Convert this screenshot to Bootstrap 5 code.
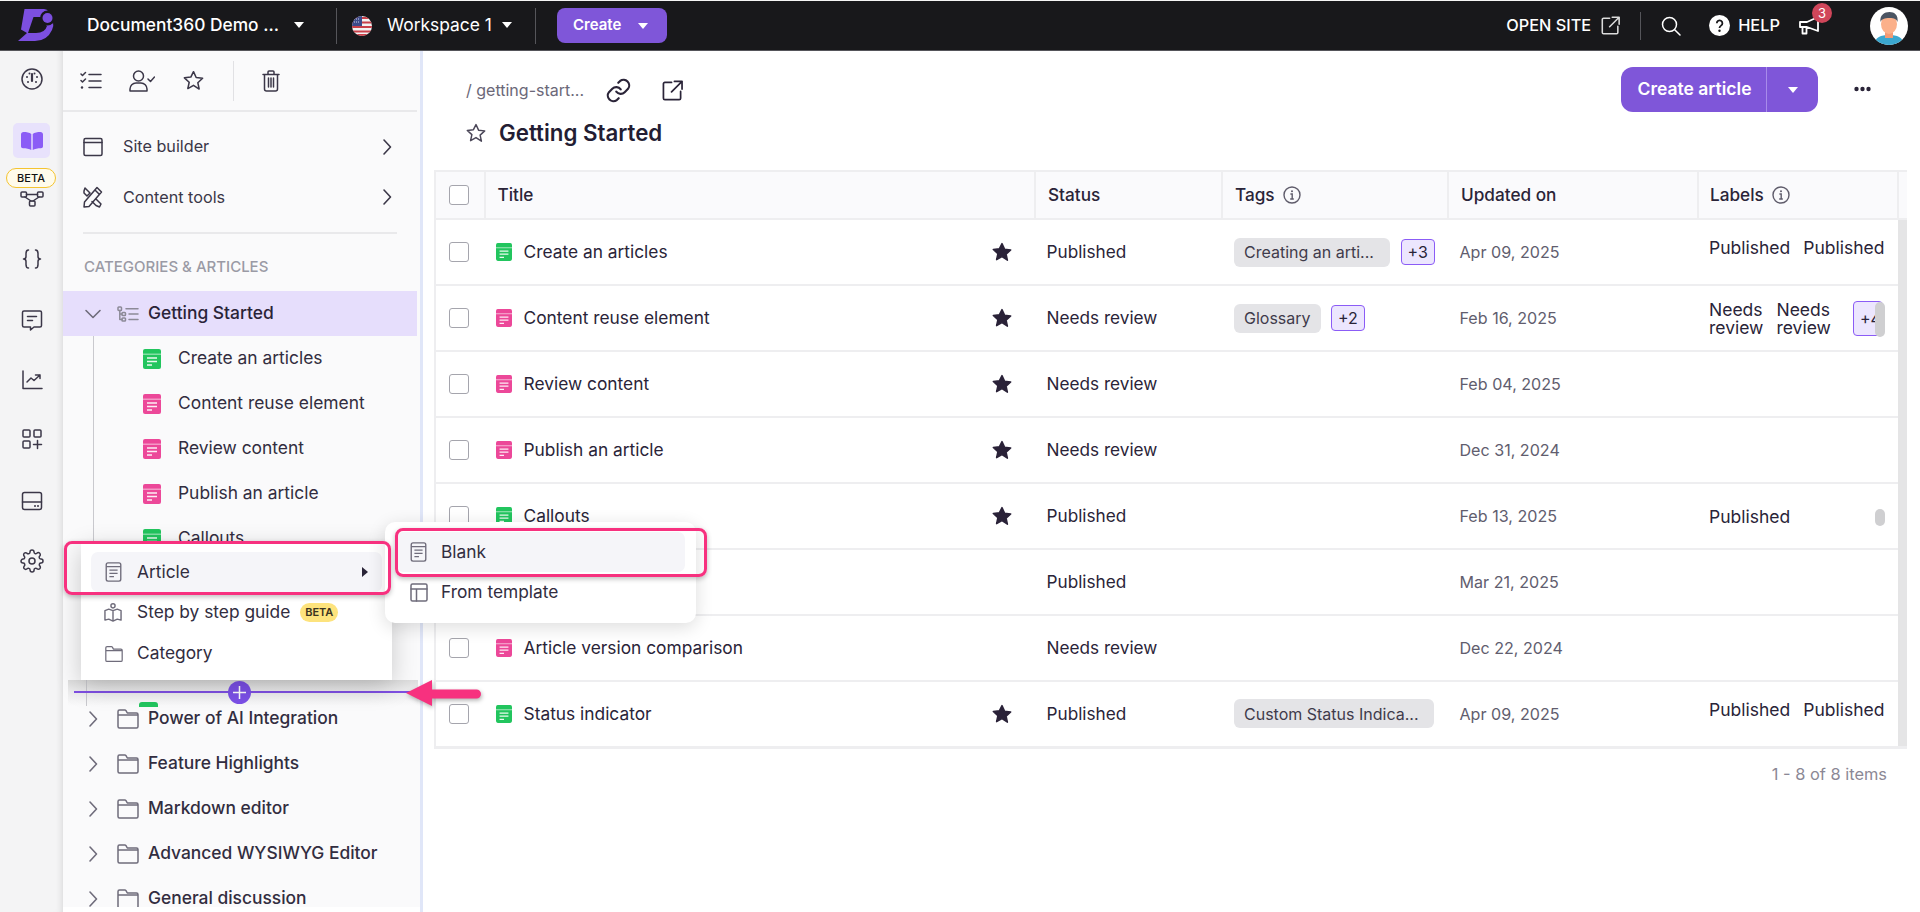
<!doctype html>
<html lang="en">
<head>
<meta charset="utf-8">
<title>Document360</title>
<link href="https://cdn.jsdelivr.net/npm/bootstrap@5.3.0/dist/css/bootstrap.min.css" rel="stylesheet">
<style>
html,body{height:912px;overflow:hidden;background:#fff}
body{font-family:Inter,"Noto Sans",sans-serif;color:#2a2438;font-size:16px;position:relative}
svg{display:block;flex:none}
.ic{fill:none;stroke:currentColor;stroke-width:1.5;stroke-linecap:round;stroke-linejoin:round}
.sym-defs{position:absolute}
.grn{color:#22c55e}.pnk{color:#ec4899}.dk{color:#2a2238}.gr{color:#5f5c6b}

.topbar{height:51px;background:#18181b;border-top:1px solid #f5f5f5;border-bottom:1px solid #55555a;color:#fff;padding:0}
.logo-box{width:87px;padding-left:18px}
.tb-org{font-size:17.35px;font-weight:500;width:249px;white-space:nowrap}
.tb-org .caret{margin-left:15px}
.tb-flag{margin-left:15px}
.tb-ws{font-size:17.4px;font-weight:400;margin-left:15px;width:125px;white-space:nowrap}
.caret{width:0;height:0;border-left:5.5px solid transparent;border-right:5.5px solid transparent;border-top:6px solid currentColor;flex:none}
.tb-div{width:1px;height:36px;background:#55555a;flex:none}
.tb-div2{margin-left:23px}
.create-top{width:110px;height:35px;margin-left:21px;background:#7f56d9;border-radius:8px;border:0;color:#fff;font-size:15px;font-weight:600;padding:0 0 0 16px}
.create-top .caret{margin-left:auto;margin-right:19px}
.open-site{font-size:16.3px;font-weight:500;white-space:nowrap}
.top-right{padding-right:12px}
.i-ext{margin-left:10px;color:#dcdcdc}
.tb-div3{height:28px;margin-left:20px}
.i-srch{margin-left:20px}
.i-help{margin-left:28px}
.help-t{font-size:16.4px;font-weight:500;margin-left:8px}
.bell-wrap{position:relative;width:22px;margin-left:19px;margin-right:49px}
.i-bell{stroke-width:1.8}
.bell-badge{position:absolute;left:13px;top:-13px;width:20px;height:20px;border-radius:50%;background:#d0465a;color:#fff;font-size:13px;text-align:center;line-height:20px}

.app{height:861px}
.rail{width:63px;background:#f4f4f5;box-shadow:inset -7px 0 7px -6px rgba(0,0,0,.12);color:#3b3748;padding-top:8px;flex:none;position:relative}
.rail-i{width:37px;height:40px;margin:0 auto 20px;display:flex;align-items:center;justify-content:center;border-radius:5px;position:relative}
.rail-i.on{height:35px;margin-top:24px;margin-bottom:21px;background:#e8e2fc;color:#8b5cf6}
.rail-i.m19{margin-bottom:19px}
.rail-i.m21{margin-bottom:21px}
.rail-i.m22{margin-bottom:22px}
.beta-r{position:absolute;left:6px;top:117px;width:50px;height:20px;border-radius:10px;border:1px solid #f4c430;background:#fffbeb;color:#111;font-size:11px;font-weight:500;line-height:18px;text-align:center;z-index:2}

.side-col{width:360px;flex:none;border-right:3px solid #e0e6f8}
.side{height:856px;background:#fafafb;overflow:hidden;width:357px}
.s-tools{height:61px;border-bottom:2px solid #e9e9eb;padding-left:2.5px;color:#3b3748;margin-right:3px}
.s-tb{width:51px;display:flex;justify-content:center}
.s-vd{width:1px;height:40px;background:#e1e1e4;margin-left:14.5px}
.s-tb2{width:74px;display:flex;justify-content:center}
.s-link{height:51px;padding:0 28px 0 20px;color:#3b3748;font-size:16.2px}
.s-link span{margin-left:20px;flex:1}
.s-first{margin-top:9.5px;height:50px}
.s-hr{height:2px;background:#e9e9eb;margin:9px 23px 0 20px}
.s-lab{font-size:15px;font-weight:500;color:#9a9aa5;margin:22px 0 0 21px;height:22px;line-height:22px}
.s-tree{margin:0;padding:0;list-style:none}
.s-row{height:45px;display:flex;align-items:center;font-size:17.4px;color:#322d40;white-space:nowrap}
.s-row.act{background:#e6defc;margin:13.5px 3px 0 0;color:#2a2438}
.s-cv{width:20px;margin-left:20px;color:#6f6c7b}
.s-fi{margin-left:14px;color:#6f6c7b}
.s-tr{stroke:#8c8a97}
.s-row .s-nm{margin-left:9px;font-weight:500}
.s-kids{position:relative;margin:0;padding:0;list-style:none}
.s-kids::before{content:"";position:absolute;left:30px;top:0;bottom:0;width:1px;background:#c9c9ce}
.s-kid{padding-left:80px;gap:17px}

.main{flex:1;min-width:0;padding:0 13px 0 11px}
.m-top{height:119px}
.crumb{font-size:16px;color:#6b6878;margin-left:32px;height:46px;white-space:nowrap}
.crumb-t{width:118px}
.i-link{margin-left:21px;color:#2a2438;stroke-width:1.9}
.i-ext2{margin-left:30px;color:#2a2438}
.m-trow{margin:3px 0 0 31px;height:34px}
.i-st{color:#4b4758}
.m-title{font-size:22.3px;font-weight:600;color:#231d33;margin-left:12px;line-height:1.2}
.m-l{padding:16px 0 0 0}
.m-btn{height:45px;width:197px;background:#7f56d9;border-radius:12px;color:#fff;font-weight:600;font-size:17.5px;border:0;padding:0}
.m-btn .t{width:145px;text-align:center;padding-left:2px;display:inline-block;white-space:nowrap}
.m-btn .d{width:1px;height:45px;background:#a88bea}
.m-btn .c{flex:1;display:flex;justify-content:center}
.m-r{margin-top:16px;padding-right:36px;gap:36px}
.i-dots{margin-top:19px}

.dt{table-layout:fixed;width:1472px;margin:0;border-collapse:collapse;color:#2a2438;--bs-table-color:#2a2438;font-size:17.35px;border:2px solid #eeeef0;border-width:2px 0 3px 2px}
.dt th,.dt td{padding:0 0 0 12px;vertical-align:middle;border-bottom:2px solid #eeeef0;font-weight:400;white-space:nowrap;overflow:hidden;box-shadow:none}
.dt th{height:48px;background:#fafafc;font-weight:500;border-right:2px solid #eeeef0;font-size:17.2px}
.dt td{height:66px}
.dt td.sc{background:#e5e5e6;padding:0;border:0}
.dt th.sc{padding:0;border-right:0;background:#fafafc}
.c1{width:49.5px}.c2{width:550px}.c3{width:187.5px}.c4{width:226px}.c5{width:250px}.c6{width:200px}.c7{width:9px}
.dt td.cbx,.dt th.cbx{padding-left:12.5px}
.dt th.ttl{padding-left:12px}
.dt td.tc{padding-left:11px}
.cb{width:20px;height:20px;border:1.5px solid #a5a5ad;border-radius:3px;background:#fff;display:block;appearance:none;margin:0}
.t-cell{display:flex;align-items:center;gap:12px;padding-right:22px}
.t-cell .grow{flex:1}
.dt td.stt{padding-left:12px;font-size:17.2px}
.dt th.hst{padding-left:12.5px}
.chip{height:29px;padding:0 10px;background:#e4e4e7;border-radius:6px;font-size:16px;color:#3f3b4b;display:inline-flex;align-items:center;white-space:nowrap;overflow:hidden}
.chip.w1{width:156px}
.chip.w2{width:200px}
.plus{height:26px;padding:0 6px;background:#ece6fe;border:1px solid #8b5cf6;border-radius:4px;font-size:16px;color:#2a2438;display:inline-flex;align-items:center;margin-left:10.5px}
.dat{font-size:16.1px;color:#615d6e}
.dt td.dc{padding-left:11.5px}
.dt td.lc{padding-left:11px;position:relative}
.dt th.hl{padding-left:11px}
.lbs{display:flex;gap:13px;line-height:18px;margin-top:-8px;font-size:17.5px}
.lbs.two{margin-top:1px;white-space:normal;width:190px}
.lbs.one{margin-top:1px}
.plus2{height:35px;width:30px;flex:none;padding:0 0 0 6px;background:#ece6fe;border:1px solid #8b5cf6;border-radius:4px;font-size:16px;display:flex;align-items:center;margin-left:9px}
.thumb{position:absolute;left:176.5px;width:10.5px;background:#cfcfd1;border-radius:5px}
.thumb.a{top:16px;height:35px}
.thumb.b{top:25px;height:17px}
.pager{font-size:16.4px;color:#8b8895;text-align:right;margin-top:13px;padding-right:20px}

.ov{position:absolute;z-index:10}
.menu1{left:81px;top:543px;width:311px;height:137px;padding:9px 10px;background:#fff;border:0;border-radius:0;box-shadow:0 6px 24px rgba(0,0,0,.2);margin:0;min-width:0;z-index:11}
.menu2{left:385px;top:522px;width:311px;height:101px;padding:10px 11px;background:#fff;border:0;border-radius:10px;box-shadow:0 4px 18px rgba(0,0,0,.14);margin:0;min-width:0;z-index:12}
.mi{height:40px;border-radius:7px;padding:0 14px;display:flex;align-items:center;gap:15px;font-size:17.35px;color:#322d40;white-space:nowrap}
.menu1 .mi+.mi{height:41px}
.menu2 .mi{gap:14px}
.menu2 .mi+.mi{gap:13px}
.mi.hov{background:#f5f5f9}
.mi .ic,.mi svg{color:#6f6c7b}
.i-guide{margin-right:0;margin-left:-1px}
.i-cat{margin-right:-1px}
.beta-y{background:#fde37d;border-radius:10px;font-size:11px;font-weight:600;color:#3a3320;height:19px;width:38px;line-height:19px;text-align:center;margin-left:-5px}
.mcar{width:0;height:0;border-top:5px solid transparent;border-bottom:5px solid transparent;border-left:6px solid #2a2438;margin-left:auto}
.pink{border:3px solid #f7317f;border-radius:8px;box-shadow:0 2px 5px rgba(0,0,0,.25);z-index:13;background:transparent}
.p1{left:64px;top:541px;width:327px;height:54px}
.p2{left:395px;top:528px;width:312px;height:49px}
.strip{left:68px;top:680px;width:350px;height:26px;background:linear-gradient(#dcdcdc,#ebebec 40%,#fafafb);z-index:9}
.strip-line{left:86px;top:680px;width:1px;height:26px;background:#c9c9ce;z-index:9}
.peek{left:139px;top:702px;width:19px;height:5px;background:#22c55e;border-radius:3px 3px 0 0;z-index:9}
.addl{left:74px;top:691px;width:336px;height:2px;background:#7f50e4;z-index:10}
.addp{left:227.5px;top:681px;width:23px;height:23px;border-radius:50%;background:#7c50e8;z-index:11}
.arr{left:405px;top:678px;z-index:14;filter:drop-shadow(1px 2px 2px rgba(0,0,0,.3))}
</style>
</head>
<body>
<svg class="sym-defs" width="0" height="0">
<defs>
<symbol id="doc" viewBox="0 0 18 20"><rect width="18" height="20" rx="2" fill="currentColor"/><rect y="4.600" width="18" height="1.200" fill="#fff" opacity=".55"/><path d="M4 9h10M4 12.500h10M4 16h5" stroke="#fff" stroke-width="1.400" opacity=".9"/></symbol>
<symbol id="out" viewBox="0 0 18 22"><rect x="1" y="1" width="16" height="20" rx="2" fill="none" stroke="currentColor" stroke-width="1.500"/><path d="M1 5h16M4.500 9h9M4.500 12.500h9M4.500 16h5" fill="none" stroke="currentColor" stroke-width="1.300"/></symbol>
<symbol id="fold" viewBox="0 0 22 20"><path d="M1 5V2.500A1.500 1.500 0 0 1 2.500 1h5.300a1.500 1.500 0 0 1 1.200.6L10.300 4H19.500A1.500 1.500 0 0 1 21 5.500v12a1.500 1.500 0 0 1-1.500 1.500h-17A1.500 1.500 0 0 1 1 17.500zM1 6h20" fill="none" stroke="currentColor" stroke-width="1.500" stroke-linejoin="round"/></symbol>
<symbol id="star" viewBox="0 0 24 24"><path d="M12 2.800l2.800 6.100 6.700.8-5 4.600 1.400 6.600L12 17l-5.900 3.400 1.400-6.600-5-4.600 6.700-.8z" fill="currentColor" stroke="currentColor" stroke-width="1.600" stroke-linejoin="round"/></symbol>
<symbol id="staro" viewBox="0 0 24 24"><path d="M12 2.800l2.800 6.100 6.700.8-5 4.600 1.400 6.600L12 17l-5.900 3.400 1.400-6.600-5-4.600 6.700-.8z" fill="none" stroke="currentColor" stroke-width="1.600" stroke-linejoin="round"/></symbol>
<symbol id="info" viewBox="0 0 18 18"><circle cx="9" cy="9" r="8" fill="none" stroke="currentColor" stroke-width="1.400"/><path d="M7.400 8h1.800v5M7.200 13h3.600" fill="none" stroke="currentColor" stroke-width="1.400"/><circle cx="9" cy="5.200" r="1" fill="currentColor"/></symbol>
<symbol id="chevr" viewBox="0 0 10 18"><path d="M2 2l6.500 7L2 16" fill="none" stroke="currentColor" stroke-width="1.600" stroke-linecap="round" stroke-linejoin="round"/></symbol>
<symbol id="ext" viewBox="0 0 22 22"><path d="M10 2.500H3A1.500 1.500 0 0 0 1.500 4v15A1.500 1.500 0 0 0 3 20.500h15a1.500 1.500 0 0 0 1.500-1.500v-7M13 1.500h8v8M21 1.500L10 12.500" fill="none" stroke="currentColor" stroke-width="1.800" stroke-linecap="round" stroke-linejoin="round"/></symbol>
</defs>
</svg>

<nav class="navbar topbar d-flex flex-nowrap align-items-center justify-content-start">
  <div class="logo-box">
    <svg width="36" height="34" viewBox="18 9 36 34"><path d="M24.500 9H44q3 0 5 3l4 10q1 4-1 8-5 11-17 11H18l9-8-6-3.500z" fill="#7c4fe0"/><path d="M33.500 17H43v5l4 4q-2 7-11 7h-8z" fill="#18181b"/><circle cx="47.500" cy="18" r="7.500" fill="#18181b"/><circle cx="47.500" cy="18" r="5" fill="#7c4fe0"/></svg>
  </div>
  <div class="tb-org d-flex align-items-center"><span>Document360 Demo ...</span><span class="caret"></span></div>
  <div class="tb-div"></div>
  <svg class="tb-flag" width="20" height="20" viewBox="0 0 20 20"><defs><clipPath id="cf"><circle cx="10" cy="10" r="10"/></clipPath></defs><g clip-path="url(#cf)"><rect width="20" height="20" fill="#f3f3f3"/><path d="M0 2h20M0 6.500h20M0 11h20M0 15.500h20M0 19h20" stroke="#c9404a" stroke-width="2.200"/><rect width="10" height="10" fill="#3d4a8a"/><path d="M2 3h6M2 6h6" stroke="#cfd4ea" stroke-width="1" stroke-dasharray="1 1"/></g></svg>
  <div class="tb-ws d-flex align-items-center"><span>Workspace 1</span><span class="caret ms-auto"></span></div>
  <div class="tb-div tb-div2"></div>
  <button type="button" class="btn create-top d-flex align-items-center"><span>Create</span><span class="caret"></span></button>
  <div class="top-right d-flex align-items-center ms-auto">
    <span class="open-site">OPEN SITE</span>
    <svg class="i-ext" width="19" height="19"><use href="#ext"/></svg>
    <span class="tb-div tb-div3"></span>
    <svg class="i-srch ic" width="20" height="20" viewBox="0 0 20 20"><circle cx="8.500" cy="8.500" r="7"/><path d="M13.700 13.700L19 19"/></svg>
    <svg class="i-help" width="21" height="21" viewBox="0 0 21 21"><circle cx="10.500" cy="10.500" r="10.500" fill="#fff"/><path d="M7.800 8.200a2.800 2.800 0 1 1 4.300 2.400c-1 .7-1.600 1.100-1.600 2.300" fill="none" stroke="#18181b" stroke-width="1.800"/><circle cx="10.500" cy="15.800" r="1.200" fill="#18181b"/></svg>
    <span class="help-t">HELP</span>
    <div class="bell-wrap"><svg width="21" height="19" viewBox="0 0 21 19" class="ic i-bell"><path d="M1 6h7l11-5v14L8 11H1zM3.500 11v6.500h4V11"/></svg><span class="bell-badge">3</span></div>
    <svg width="38" height="38" viewBox="0 0 38 38"><defs><clipPath id="av"><circle cx="19" cy="19" r="19"/></clipPath></defs><g clip-path="url(#av)"><rect width="38" height="38" fill="#fff"/><path d="M4 38c1-8 7-10 15-10s14 2 15 10z" fill="#3ba7cf"/><rect x="15" y="22" width="8" height="9" fill="#f29a74"/><ellipse cx="19" cy="17" rx="8" ry="10" fill="#fbb08a"/><path d="M10.500 15c-1-7 4-10 9-10s9 3 8 10c-1-3-3-4-8-4s-8 1-9 4z" fill="#4b5563"/></g></svg>
  </div>
</nav>

<div class="app d-flex">
  <aside class="rail">
    <div class="rail-i"><svg class="ic" width="24" height="24" viewBox="0 0 24 24"><circle cx="12" cy="12" r="10"/><path d="M12 7v7" stroke-width="2.200"/><path d="M7 10h.01M17 10h.01M8 15h.01M16 15h.01M9.500 6.500h.01M14.500 6.500h.01" stroke-width="2"/></svg></div>
    <div class="rail-i on"><svg width="24" height="18" viewBox="0 0 24 18"><path d="M1 2.500C1 1 2 0 3.500 0c3 0 6 .5 7.800 2v16c-2-1.200-5-1.800-8.300-1.800-1.200 0-2-.8-2-2zM23 2.500C23 1 22 0 20.500 0c-3 0-6 .5-7.800 2v16c2-1.200 5-1.800 8.300-1.800 1.200 0 2-.8 2-2z" fill="currentColor"/></svg></div>
    <div class="rail-i"><svg class="ic" width="24" height="16" viewBox="0 0 24 16"><rect x="1" y="1" width="5.500" height="5" rx="1"/><rect x="17.500" y="1" width="5.500" height="5" rx="1"/><rect x="9.500" y="10" width="5.500" height="5" rx="1"/><path d="M6.500 3.500h11M5 6l6 4M19 6l-6 4"/></svg></div>
    <div class="rail-i m21"><svg class="ic" width="24" height="24" viewBox="0 0 24 24"><path d="M8.500 3C6 3 6 5 6 6.500v3C6 11 5 12 3.500 12 5 12 6 13 6 14.500v3C6 19 6 21 8.500 21M15.500 3C18 3 18 5 18 6.500v3c0 1.500 1 2.500 2.500 2.500-1.500 0-2.500 1-2.500 2.500v3c0 1.500 0 3.500-2.500 3.500"/></svg></div>
    <div class="rail-i"><svg class="ic" width="24" height="24" viewBox="0 0 24 24"><path d="M4 3h16a1.500 1.500 0 0 1 1.500 1.500v13A1.500 1.500 0 0 1 20 19h-6l-3.500 3V19H4a1.500 1.500 0 0 1-1.500-1.500v-13A1.500 1.500 0 0 1 4 3z"/><path d="M7.500 8.500h9M7.500 12.500h5"/></svg></div>
    <div class="rail-i m19"><svg class="ic" width="24" height="24" viewBox="0 0 24 24"><path d="M3 3v17.500h19M7 14l4-4 3 2.500 6-5.500M15.500 7H20v3.500"/></svg></div>
    <div class="rail-i m22"><svg class="ic" width="24" height="24" viewBox="0 0 24 24"><rect x="3" y="3" width="7" height="7" rx="1"/><rect x="14" y="3" width="7" height="7" rx="1"/><rect x="3" y="14" width="7" height="7" rx="1"/><path d="M17.500 13.500v8M13.500 17.500h8"/></svg></div>
    <div class="rail-i"><svg class="ic" width="24" height="24" viewBox="0 0 24 24"><rect x="2.500" y="3.500" width="19" height="17" rx="2"/><path d="M2.500 13h19"/><path d="M15 17h.01M18 17h.01" stroke-width="2"/></svg></div>
    <div class="rail-i"><svg class="ic" width="24" height="24" viewBox="0 0 24 24"><circle cx="12" cy="12" r="3"/><path d="M19.400 15a1.650 1.650 0 0 0 .33 1.820l.06.06a2 2 0 0 1 0 2.830 2 2 0 0 1-2.830 0l-.06-.06a1.650 1.650 0 0 0-1.820-.33 1.650 1.650 0 0 0-1 1.510V21a2 2 0 0 1-2 2 2 2 0 0 1-2-2v-.09A1.650 1.650 0 0 0 9 19.400a1.650 1.650 0 0 0-1.820.33l-.06.06a2 2 0 0 1-2.830 0 2 2 0 0 1 0-2.830l.06-.06a1.650 1.650 0 0 0 .33-1.820 1.650 1.650 0 0 0-1.510-1H3a2 2 0 0 1-2-2 2 2 0 0 1 2-2h.09A1.650 1.650 0 0 0 4.600 9a1.650 1.650 0 0 0-.33-1.820l-.06-.06a2 2 0 0 1 0-2.830 2 2 0 0 1 2.830 0l.06.06a1.650 1.650 0 0 0 1.820.33H9a1.650 1.650 0 0 0 1-1.510V3a2 2 0 0 1 2-2 2 2 0 0 1 2 2v.09a1.650 1.650 0 0 0 1 1.510 1.650 1.650 0 0 0 1.820-.33l.06-.06a2 2 0 0 1 2.830 0 2 2 0 0 1 0 2.830l-.06.06a1.650 1.650 0 0 0-.33 1.820V9a1.650 1.650 0 0 0 1.510 1H21a2 2 0 0 1 2 2 2 2 0 0 1-2 2h-.09a1.650 1.650 0 0 0-1.510 1z"/></svg></div>
    <span class="beta-r">BETA</span>
  </aside>

  <div class="side-col">
    <div class="side">
      <div class="s-tools d-flex align-items-center">
        <div class="s-tb"><svg class="ic" width="22" height="20" viewBox="0 0 22 20"><path d="M9 3.500h12M9 10h12M9 16.500h12M1 3l1.500 1.500L5.500 1.500M1 9.500L2.500 11l3-3"/><path d="M2 16.500h.01" stroke-width="2.400"/></svg></div>
        <div class="s-tb"><svg class="ic" width="26" height="22" viewBox="0 0 26 22"><circle cx="9.500" cy="6" r="5"/><path d="M1 21v-2a6 6 0 0 1 6-6h5a6 6 0 0 1 6 6v2zM19 9l2.500 2.500L25.500 7"/></svg></div>
        <div class="s-tb"><svg width="23" height="23"><use href="#staro"/></svg></div>
        <div class="s-vd"></div>
        <div class="s-tb2"><svg class="ic" width="18" height="22" viewBox="0 0 18 22"><path d="M1 4.500h16M6 4.500V2a1 1 0 0 1 1-1h4a1 1 0 0 1 1 1v2.500M2.500 4.500V19a2 2 0 0 0 2 2h9a2 2 0 0 0 2-2V4.500M6.500 8v9M9 8v9M11.500 8v9"/></svg></div>
      </div>
      <div class="s-link s-first d-flex align-items-center"><svg class="ic" width="20" height="20" viewBox="0 0 20 20"><rect x="1" y="1.500" width="18" height="17" rx="1.500"/><path d="M1 5.500h18"/></svg><span>Site builder</span><svg width="10" height="18"><use href="#chevr"/></svg></div>
      <div class="s-link d-flex align-items-center"><svg class="ic" width="20" height="22" viewBox="0 0 20 22"><path d="M14 1.500l4.500 4.500L6 20.500l-5 .5.500-5zM12 4l4.500 4.500M2 2l5 5-3 3-3-3V5zM13 13l5 5-1.500 3-3.500-1.500-4-4"/></svg><span>Content tools</span><svg width="10" height="18"><use href="#chevr"/></svg></div>
      <div class="s-hr"></div>
      <div class="s-lab">CATEGORIES &amp; ARTICLES</div>
      <div class="s-row act"><svg class="s-cv" width="20" height="10" viewBox="0 0 20 10"><path d="M3 1.500l7 7 7-7" fill="none" stroke="currentColor" stroke-width="1.600" stroke-linecap="round" stroke-linejoin="round"/></svg>
        <svg class="s-fi ic s-tr" width="22" height="16" viewBox="0 0 22 16"><rect x="1" y="1" width="3.500" height="3.500" rx=".8"/><rect x="5" y="6.500" width="3.500" height="3" rx=".8"/><rect x="5" y="12" width="3.500" height="3" rx=".8"/><path d="M2.800 4.500v9H5M2.800 8H5M9 2.800h12M12 8h9M12 13.500h9"/></svg>
        <span class="s-nm">Getting Started</span></div>
      <ul class="s-kids">
        <li class="s-row s-kid"><svg class="grn" width="18" height="20"><use href="#doc"/></svg><span>Create an articles</span></li>
        <li class="s-row s-kid"><svg class="pnk" width="18" height="20"><use href="#doc"/></svg><span>Content reuse element</span></li>
        <li class="s-row s-kid"><svg class="pnk" width="18" height="20"><use href="#doc"/></svg><span>Review content</span></li>
        <li class="s-row s-kid"><svg class="pnk" width="18" height="20"><use href="#doc"/></svg><span>Publish an article</span></li>
        <li class="s-row s-kid"><svg class="grn" width="18" height="20"><use href="#doc"/></svg><span>Callouts</span></li>
        <li class="s-row s-kid"></li>
        <li class="s-row s-kid"></li>
        <li class="s-row s-kid"></li>
      </ul>
      <ul class="s-tree">
        <li class="s-row"><svg class="s-cv" width="20" height="18"><use href="#chevr"/></svg><svg class="s-fi" width="22" height="20"><use href="#fold"/></svg><span class="s-nm">Power of AI Integration</span></li>
        <li class="s-row"><svg class="s-cv" width="20" height="18"><use href="#chevr"/></svg><svg class="s-fi" width="22" height="20"><use href="#fold"/></svg><span class="s-nm">Feature Highlights</span></li>
        <li class="s-row"><svg class="s-cv" width="20" height="18"><use href="#chevr"/></svg><svg class="s-fi" width="22" height="20"><use href="#fold"/></svg><span class="s-nm">Markdown editor</span></li>
        <li class="s-row"><svg class="s-cv" width="20" height="18"><use href="#chevr"/></svg><svg class="s-fi" width="22" height="20"><use href="#fold"/></svg><span class="s-nm">Advanced WYSIWYG Editor</span></li>
        <li class="s-row"><svg class="s-cv" width="20" height="18"><use href="#chevr"/></svg><svg class="s-fi" width="22" height="20"><use href="#fold"/></svg><span class="s-nm">General discussion</span></li>
      </ul>
    </div>
  </div>

  <main class="main">
    <div class="m-top d-flex justify-content-between">
      <div class="m-l">
        <div class="d-flex align-items-center crumb"><span class="crumb-t">/ getting-start...</span>
          <svg class="ic i-link" width="27" height="27" viewBox="0 0 24 24"><path d="M10 13a5 5 0 0 0 7.500.5l3-3a5 5 0 0 0-7-7l-1.700 1.700M14 11a5 5 0 0 0-7.500-.5l-3 3a5 5 0 0 0 7 7l1.700-1.700"/></svg>
          <svg class="i-ext2" width="21" height="21"><use href="#ext"/></svg>
        </div>
        <div class="d-flex align-items-center m-trow"><svg class="i-st" width="22" height="22"><use href="#staro"/></svg><span class="m-title">Getting Started</span></div>
      </div>
      <div class="d-flex align-items-start m-r">
        <button type="button" class="btn m-btn d-flex align-items-center"><span class="t">Create article</span><span class="d"></span><span class="c"><span class="caret"></span></span></button>
        <svg class="i-dots" width="17" height="6" viewBox="0 0 17 6"><circle cx="2.500" cy="3" r="2.200" fill="#2a2438"/><circle cx="8.500" cy="3" r="2.200" fill="#2a2438"/><circle cx="14.500" cy="3" r="2.200" fill="#2a2438"/></svg>
      </div>
    </div>

    <table class="table dt">
      <colgroup><col class="c1"><col class="c2"><col class="c3"><col class="c4"><col class="c5"><col class="c6"><col class="c7"></colgroup>
      <thead><tr>
        <th class="cbx"><input class="cb" type="checkbox" aria-label="Select all"></th>
        <th class="ttl">Title</th>
        <th class="hst">Status</th>
        <th><span class="d-flex align-items-center gap-2">Tags <svg class="gr" width="18" height="18"><use href="#info"/></svg></span></th>
        <th>Updated on</th>
        <th class="hl"><span class="d-flex align-items-center gap-2">Labels <svg class="gr" width="18" height="18"><use href="#info"/></svg></span></th>
        <th class="sc"></th>
      </tr></thead>
      <tbody>
        <tr><td class="cbx"><input class="cb" type="checkbox" aria-label="Select"></td>
          <td class="tc"><div class="t-cell"><svg class="grn" width="16" height="18"><use href="#doc"/></svg><span class="grow">Create an articles</span><svg class="dk" width="22" height="22"><use href="#star"/></svg></div></td>
          <td class="stt">Published</td>
          <td><span class="chip w1">Creating an arti...</span><span class="plus">+3</span></td>
          <td class="dc"><span class="dat">Apr 09, 2025</span></td>
          <td class="lc"><div class="lbs"><span>Published</span><span>Published</span></div></td><td class="sc"></td></tr>
        <tr><td class="cbx"><input class="cb" type="checkbox" aria-label="Select"></td>
          <td class="tc"><div class="t-cell"><svg class="pnk" width="16" height="18"><use href="#doc"/></svg><span class="grow">Content reuse element</span><svg class="dk" width="22" height="22"><use href="#star"/></svg></div></td>
          <td class="stt">Needs review</td>
          <td><span class="chip">Glossary</span><span class="plus">+2</span></td>
          <td class="dc"><span class="dat">Feb 16, 2025</span></td>
          <td class="lc"><div class="lbs two align-items-center"><span>Needs<br>review</span><span>Needs<br>review</span><span class="plus2">+4</span></div><span class="thumb a"></span></td><td class="sc"></td></tr>
        <tr><td class="cbx"><input class="cb" type="checkbox" aria-label="Select"></td>
          <td class="tc"><div class="t-cell"><svg class="pnk" width="16" height="18"><use href="#doc"/></svg><span class="grow">Review content</span><svg class="dk" width="22" height="22"><use href="#star"/></svg></div></td>
          <td class="stt">Needs review</td><td></td>
          <td class="dc"><span class="dat">Feb 04, 2025</span></td><td class="lc"></td><td class="sc"></td></tr>
        <tr><td class="cbx"><input class="cb" type="checkbox" aria-label="Select"></td>
          <td class="tc"><div class="t-cell"><svg class="pnk" width="16" height="18"><use href="#doc"/></svg><span class="grow">Publish an article</span><svg class="dk" width="22" height="22"><use href="#star"/></svg></div></td>
          <td class="stt">Needs review</td><td></td>
          <td class="dc"><span class="dat">Dec 31, 2024</span></td><td class="lc"></td><td class="sc"></td></tr>
        <tr><td class="cbx"><input class="cb" type="checkbox" aria-label="Select"></td>
          <td class="tc"><div class="t-cell"><svg class="grn" width="16" height="18"><use href="#doc"/></svg><span class="grow">Callouts</span><svg class="dk" width="22" height="22"><use href="#star"/></svg></div></td>
          <td class="stt">Published</td><td></td>
          <td class="dc"><span class="dat">Feb 13, 2025</span></td>
          <td class="lc"><div class="lbs one"><span>Published</span></div><span class="thumb b"></span></td><td class="sc"></td></tr>
        <tr><td class="cbx"></td>
          <td class="tc"></td>
          <td class="stt">Published</td><td></td>
          <td class="dc"><span class="dat">Mar 21, 2025</span></td><td class="lc"></td><td class="sc"></td></tr>
        <tr><td class="cbx"><input class="cb" type="checkbox" aria-label="Select"></td>
          <td class="tc"><div class="t-cell"><svg class="pnk" width="16" height="18"><use href="#doc"/></svg><span class="grow">Article version comparison</span></div></td>
          <td class="stt">Needs review</td><td></td>
          <td class="dc"><span class="dat">Dec 22, 2024</span></td><td class="lc"></td><td class="sc"></td></tr>
        <tr><td class="cbx"><input class="cb" type="checkbox" aria-label="Select"></td>
          <td class="tc"><div class="t-cell"><svg class="grn" width="16" height="18"><use href="#doc"/></svg><span class="grow">Status indicator</span><svg class="dk" width="22" height="22"><use href="#star"/></svg></div></td>
          <td class="stt">Published</td>
          <td><span class="chip w2">Custom Status Indica...</span></td>
          <td class="dc"><span class="dat">Apr 09, 2025</span></td>
          <td class="lc"><div class="lbs"><span>Published</span><span>Published</span></div></td><td class="sc"></td></tr>
      </tbody>
    </table>
    <div class="pager">1 - 8 of 8 items</div>
  </main>
</div>

<!-- floating: add-line strip, context menus, annotation highlights and arrow -->
<div class="ov strip"></div>
<div class="ov strip-line"></div>
<div class="ov peek"></div>
<div class="ov addl"></div>
<div class="ov addp d-flex align-items-center justify-content-center"><svg width="13" height="13" viewBox="0 0 13 13"><path d="M6.500 0v13M0 6.500h13" stroke="#fff" stroke-width="1.500"/></svg></div>

<div class="dropdown-menu show menu1">
  <div class="mi hov"><svg width="17" height="20"><use href="#out"/></svg><span>Article</span><span class="mcar"></span></div>
  <div class="mi"><svg class="ic i-guide" width="18" height="19" viewBox="0 0 19 20"><circle cx="9.500" cy="3" r="2.200"/><path d="M9.500 8v11M9.500 8L5 6.500 1 8v10l4-1 4.500 2 4.500-2 4 1V8l-4-1.500z"/></svg><span>Step by step guide</span><span class="beta-y">BETA</span></div>
  <div class="mi"><svg class="i-cat" width="18" height="18"><use href="#fold"/></svg><span>Category</span></div>
</div>
<div class="dropdown-menu show menu2">
  <div class="mi hov"><svg width="17" height="20"><use href="#out"/></svg><span>Blank</span></div>
  <div class="mi"><svg class="ic" width="18" height="19" viewBox="0 0 18 19"><rect x="1" y="1" width="16" height="17" rx="1.500"/><path d="M1 6h16M6.500 6v12"/></svg><span>From template</span></div>
</div>

<div class="ov pink p1"></div>
<div class="ov pink p2"></div>
<svg class="ov arr" width="80" height="32" viewBox="0 0 80 32"><path d="M1 15L27 2v9.500h44.500a4.500 4.500 0 0 1 0 9H27V28z" fill="#f7317f"/></svg>

<script src="https://cdn.jsdelivr.net/npm/bootstrap@5.3.0/dist/js/bootstrap.bundle.min.js"></script>
</body>
</html>
